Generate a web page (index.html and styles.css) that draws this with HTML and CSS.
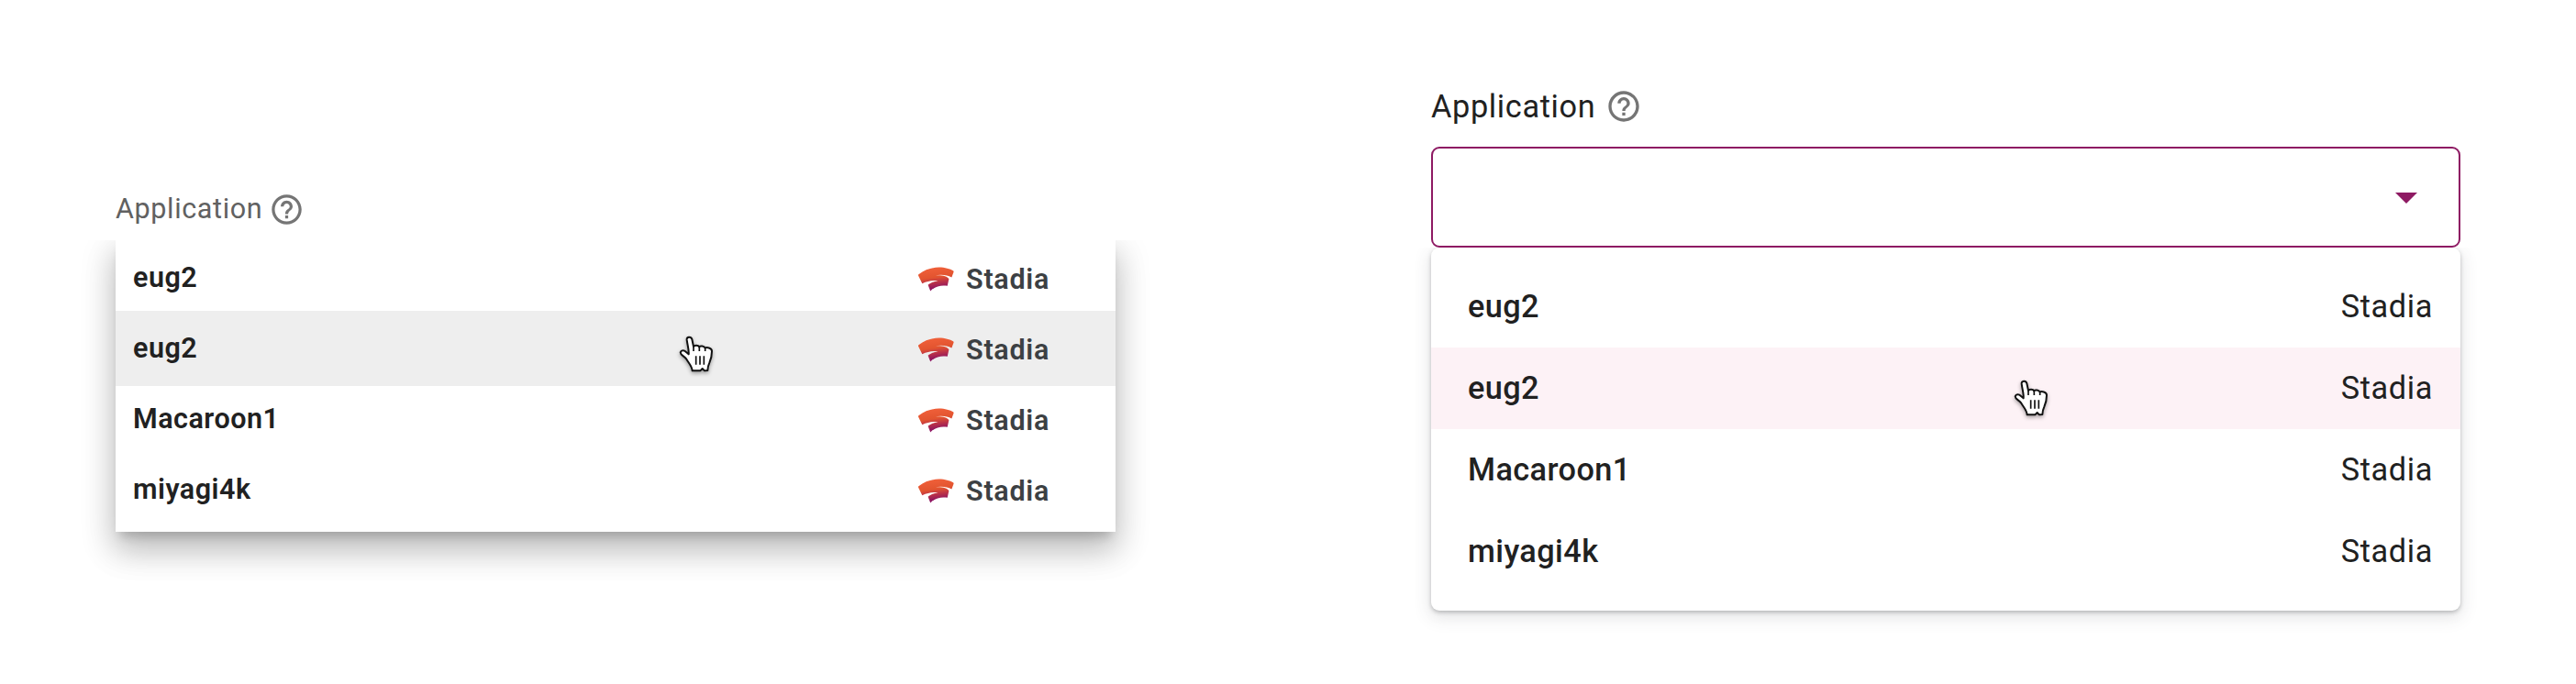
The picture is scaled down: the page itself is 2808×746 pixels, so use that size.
FILE: index.html
```html
<!DOCTYPE html>
<html lang="en">
<head>
<meta charset="utf-8">
<title>Application picker</title>
<link rel="stylesheet" href="styles.css">
</head>
<body>
<svg class="defs" width="0" height="0" aria-hidden="true">
  <defs>
    <linearGradient id="flame" x1="0.4" y1="0" x2="0.6" y2="1">
      <stop offset="0" stop-color="#f0603a"/>
      <stop offset="0.42" stop-color="#e2542f"/>
      <stop offset="0.62" stop-color="#bd3347"/>
      <stop offset="0.85" stop-color="#91175f"/>
      <stop offset="1" stop-color="#8a1168"/>
    </linearGradient>
    <symbol id="stadia" viewBox="57 121 118 80">
      <path fill="url(#flame)" d="M58 145C80 128 105 122 125 122C145 122 162 128 172 133Q175 135 173 139L167 155C152 147 135 144 108 149C135 147 152 151 158 160L153 183C135 180 115 182 97 200L89 180C95 174 108 168 122 166C104 164 88 167 70 175L57 149Q56 147 58 145Z"/>
    </symbol>
    <symbol id="help" viewBox="0 0 24 24">
      <path d="M11 18h2v-2h-2v2zm1-16C6.480 2 2 6.480 2 12s4.480 10 10 10 10-4.480 10-10S17.520 2 12 2zm0 18c-4.410 0-8-3.590-8-8s3.590-8 8-8 8 3.590 8 8-3.590 8-8 8zm0-14c-2.210 0-4 1.790-4 4h2c0-1.100.9-2 2-2s2 .9 2 2c0 2-3 1.750-3 5h2c0-2.250 3-2.500 3-5 0-2.210-1.790-4-4-4z"/>
    </symbol>
    <symbol id="hand" viewBox="60 48 114 120">
      <path fill="#fff" stroke="#111" stroke-width="6" stroke-linejoin="round" d="M86 62C85 51 100 50 103 60L108 84C111 79 123 79 127 85C130 80 143 82 146 89C150 85 168 88 168 99C168 114 165 126 160 137C157 143 155 148 154 162L144 163L137 156L130 163L104 163C103 148 92 138 84 124C78 115 65 112 65 103C68 95 77 95 84 102L92 109C94 98 88 78 86 62Z"/>
      <path fill="none" stroke="#111" stroke-width="5" d="M108 83V99M127 84V99M146 88V99M116 115V143M129 115V143M142 115V143"/>
    </symbol>
  </defs>
</svg>
<main class="stage">
  <section class="picker picker-old">
    <div class="label"><span>Application</span><svg class="help"><use href="#help"/></svg></div>
    <ul class="menu">
      <li class="row"><span class="name">eug2</span><svg class="logo"><use href="#stadia"/></svg><span class="platform">Stadia</span></li>
      <li class="row hover"><span class="name">eug2</span><svg class="logo"><use href="#stadia"/></svg><span class="platform">Stadia</span><svg class="cursor"><use href="#hand"/></svg></li>
      <li class="row"><span class="name">Macaroon1</span><svg class="logo"><use href="#stadia"/></svg><span class="platform">Stadia</span></li>
      <li class="row"><span class="name">miyagi4k</span><svg class="logo"><use href="#stadia"/></svg><span class="platform">Stadia</span></li>
    </ul>
  </section>
  <section class="picker picker-new">
    <div class="label"><span>Application</span><svg class="help"><use href="#help"/></svg></div>
    <div class="field"><svg class="arrow" viewBox="0 0 24 12"><path d="M0 0H24L12 12Z"/></svg></div>
    <ul class="menu">
      <li class="row"><span class="name">eug2</span><span class="platform">Stadia</span></li>
      <li class="row hover"><span class="name">eug2</span><span class="platform">Stadia</span><svg class="cursor"><use href="#hand"/></svg></li>
      <li class="row"><span class="name">Macaroon1</span><span class="platform">Stadia</span></li>
      <li class="row"><span class="name">miyagi4k</span><span class="platform">Stadia</span></li>
    </ul>
  </section>
</main>
</body>
</html>
```

FILE: styles.css
```css
* { box-sizing: border-box; }
body {
  margin: 0;
  background: #fff;
  color: #212121;
  font-family: Roboto, sans-serif;
}
.defs { position: absolute; }
.stage {
  display: flex;
  align-items: flex-start;
  gap: 344px;
  height: 746px;
  padding-left: 126px;
  overflow: hidden;
}
.label { display: flex; align-items: center; }
.menu {
  margin: 0;
  padding: 0;
  list-style: none;
  background: #fff;
}
.row { display: flex; align-items: center; position: relative; }
.name { margin-right: auto; padding-bottom: 1px; font-weight: 500; }
.cursor {
  position: absolute;
  width: 38px;
  height: 40px;
  filter: drop-shadow(0 2px 2px rgba(0, 0, 0, 0.35));
}

.picker-old { width: 1090px; padding-top: 208px; font-size: 30.5px; }
.picker-old .label {
  height: 40px;
  margin-bottom: 10px;
  color: #616161;
  letter-spacing: 0.65px;
}
.picker-old .label span { padding-bottom: 2px; }
.picker-old .help { width: 39px; height: 39px; margin-left: 7px; fill: #757575; }
.picker-old .menu {
  height: 322px;
  padding-top: 6px;
  box-shadow:
    0 10px 10px -5px rgba(0, 0, 0, 0.16),
    0 20px 32px 0 rgba(0, 0, 0, 0.17),
    0 16px 36px 4px rgba(0, 0, 0, 0.12);
  clip-path: inset(4px -60px -90px -60px);
}
.picker-old .row { height: 77px; padding: 0 72px 0 19px; }
.picker-old .hover {
  height: 82px;
  margin: -2px 0 -3px;
  padding-top: 2px;
  padding-bottom: 3px;
  background: #eee;
}
.picker-old .name { font-weight: 600; letter-spacing: 0.5px; }
.picker-old .logo { width: 39px; height: 27px; margin: 3px 13px 0 0; }
.picker-old .platform {
  padding-top: 3px;
  color: #3c4043;
  font-weight: 600;
  letter-spacing: 0.7px;
}
.picker-old .cursor { left: 614px; top: 27px; }

.picker-new { width: 1122px; padding-top: 96px; font-size: 34.3px; }
.picker-new .label { height: 40px; margin-bottom: 24px; letter-spacing: 0.65px; }
.picker-new .help { width: 40px; height: 40px; margin-left: 11px; fill: #757575; }
.field {
  display: flex;
  align-items: center;
  justify-content: flex-end;
  height: 110px;
  padding-right: 45px;
  border: 2.5px solid #8e1a63;
  border-radius: 9px;
}
.arrow { width: 24px; height: 12px; margin-top: 2px; fill: #8e1a63; }
.picker-new .menu {
  height: 396px;
  padding-top: 20px;
  border-radius: 9px;
  box-shadow:
    0 2px 4px rgba(60, 64, 67, 0.3),
    0 6px 18px 2px rgba(60, 64, 67, 0.13);
  clip-path: inset(0 -40px -50px -40px);
}
.picker-new .row { height: 89px; padding: 0 30px 0 40px; }
.picker-new .hover { background: #fdf2f6; }
.picker-new .name { letter-spacing: 0.4px; }
.picker-new .platform { padding-bottom: 1px; letter-spacing: 0.6px; }
.picker-new .cursor { left: 635px; top: 35px; }
```
